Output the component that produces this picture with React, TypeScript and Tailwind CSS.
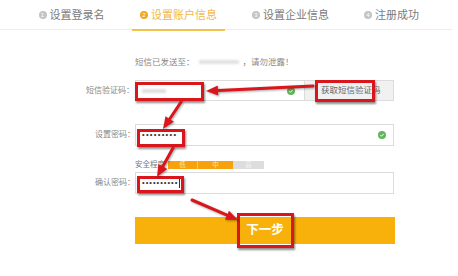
import React from "react";

const font = { fontFamily: '"Liberation Sans", "Noto Sans CJK SC", sans-serif' };

type Arrow = { x1: number; y1: number; x2: number; y2: number };

const arrows: Arrow[] = [
  { x1: 313, y1: 86, x2: 206, y2: 91 },
  { x1: 181, y1: 102, x2: 163, y2: 129 },
  { x1: 173, y1: 148, x2: 157, y2: 177 },
  { x1: 192, y1: 200, x2: 238, y2: 220 },
];

function head(a: Arrow) {
  const dx = a.x2 - a.x1;
  const dy = a.y2 - a.y1;
  const len = Math.hypot(dx, dy);
  const ux = dx / len;
  const uy = dy / len;
  const bx = a.x2 - ux * 12;
  const by = a.y2 - uy * 12;
  const px = -uy * 5;
  const py = ux * 5;
  return {
    pts: `${a.x2},${a.y2} ${bx + px},${by + py} ${bx - px},${by - py}`,
    lx: bx,
    ly: by,
  };
}

function Tab({ n, label, active, w, ml }: { n: number; label: string; active?: boolean; w: string; ml: string }) {
  return (
    <div className={`${w} ${ml} h-[30px] flex items-center justify-center gap-[3px] relative`}>
      <span
        className={`w-[8px] h-[8px] rounded-full flex items-center justify-center text-[6px] text-white ${active ? "bg-[#f2a818]" : "bg-[#c4c4c4]"}`}
      >
        {n}
      </span>
      <span className={`text-[11px] ${active ? "text-[#f3b746]" : "text-[#7a7a7a]"}`}>{label}</span>
      {active && <div className="absolute left-0 right-0 bottom-[-1px] h-[2px] bg-[#f3c24e]" />}
    </div>
  );
}

function Check() {
  return (
    <span className="w-[8px] h-[8px] rounded-full bg-[#5fb55a] flex items-center justify-center">
      <svg width="6" height="6" viewBox="0 0 6 6">
        <path d="M1.2 3 L2.5 4.2 L4.8 1.8" stroke="#fff" strokeWidth="1" fill="none" />
      </svg>
    </span>
  );
}

function Box({ className }: { className: string }) {
  return <div className={`absolute border-[3px] border-[#d9161c] shadow-[1px_2px_2px_rgba(0,0,0,0.45)] ${className}`} />;
}

export default function App() {
  return (
    <div className="w-[458px] h-[276px] bg-white relative overflow-hidden" style={font}>
      <div className="flex pl-[25px] border-b border-[#ececec] w-[452px] h-[30px]">
        <Tab n={1} label="设置登录名" w="w-[93px]" ml="ml-0" />
        <Tab n={2} label="设置账户信息" active w="w-[93px]" ml="ml-[14px]" />
        <Tab n={3} label="设置企业信息" w="w-[93px]" ml="ml-[19px]" />
        <Tab n={4} label="注册成功" w="w-[93px]" ml="ml-[8px]" />
      </div>

      <div className="pl-[135px] pt-[27px] flex flex-col">
        <div className="h-[10px] flex items-center text-[8.5px] text-[#888]">
          <span>短信已发送至：</span>
          <span className="w-[40px] h-[4px] mx-[4px] bg-[#e2e2e2] blur-[1px]" />
          <span>，请勿泄露！</span>
        </div>

        <div className="mt-[13px] h-[21px] flex relative">
          <span className="absolute right-full pr-[1px] h-full flex items-center text-[8px] text-[#888] whitespace-nowrap">短信验证码：</span>
          <div className="w-[170px] h-full border border-[#dcdcdc] flex items-center justify-between pl-[6px] pr-[9px]">
            <span className="w-[24px] h-[4px] bg-[#dedede] blur-[1px]" />
            <Check />
          </div>
          <div className="w-[89px] h-full border border-l-0 border-[#dcdcdc] bg-[#f1f1f1] flex items-center pl-[16px] text-[8.5px] text-[#666]">
            获取短信验证码
          </div>
        </div>

        <div className="mt-[23px] w-[259px] h-[22px] border border-[#dcdcdc] flex items-center justify-between pl-[6px] pr-[7px] relative">
          <span className="absolute right-full pr-[1px] h-full flex items-center text-[8px] text-[#888] whitespace-nowrap">设置密码：</span>
          <span className="text-[7.5px] tracking-[1.3px] text-[#333] leading-none">•••••••••</span>
          <Check />
        </div>

        <div className="mt-[15px] h-[8px] flex items-center">
          <span className="text-[7.5px] text-[#777] w-[33px]">安全程度</span>
          <div className="flex h-full text-[6.5px]">
            <span className="w-[30px] bg-[#f7a20d] text-[#fde4b0] flex items-center justify-center border-r border-[#fbc56a]">低</span>
            <span className="w-[35px] bg-[#f7a20d] text-[#fde4b0] flex items-center justify-center">中</span>
            <span className="w-[31px] bg-[#dddddd] text-[#f4f4f4] flex items-center justify-center">高</span>
          </div>
        </div>

        <div className="mt-[3px] w-[259px] h-[22px] border border-[#dcdcdc] flex items-center pl-[6px] relative">
          <span className="absolute right-full pr-[1px] h-full flex items-center text-[8px] text-[#888] whitespace-nowrap">确认密码：</span>
          <span className="text-[7.5px] tracking-[1px] text-[#333] leading-none">••••••••••</span>
          <span className="w-[1px] h-[9px] bg-[#333] ml-[1px]" />
        </div>

        <div className="mt-[23px] w-[260px] h-[27px] bg-[#f8b10b] flex items-center justify-center text-white font-bold text-[12.5px]">
          下一步
        </div>
      </div>

      <Box className="left-[135px] top-[82px] w-[69px] h-[19px]" />
      <Box className="left-[315px] top-[80px] w-[60px] h-[22px]" />
      <Box className="left-[137px] top-[129px] w-[48px] h-[18px]" />
      <Box className="left-[137px] top-[176px] w-[47px] h-[17px]" />
      <Box className="left-[237px] top-[213px] w-[57px] h-[35px]" />

      <svg className="absolute inset-0 pointer-events-none" width="458" height="276">
        {arrows.map((a, i) => {
          const h = head(a);
          return (
            <g key={i} style={{ filter: "drop-shadow(1px 1px 1px rgba(0,0,0,0.35))" }}>
              <line x1={a.x1} y1={a.y1} x2={h.lx} y2={h.ly} stroke="#d9161c" strokeWidth="3" strokeLinecap="round" />
              <polygon points={h.pts} fill="#d9161c" />
            </g>
          );
        })}
      </svg>
    </div>
  );
}
